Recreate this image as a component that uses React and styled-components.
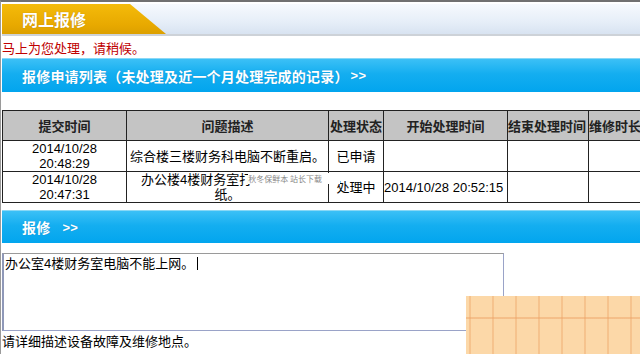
import React from "react";
import styled, { createGlobalStyle } from "styled-components";

const Global = createGlobalStyle`
  html, body { margin: 0; padding: 0; background: #fff; }
  body { font-family: "Liberation Sans", "Noto Sans CJK SC", sans-serif; font-size: 13px; color: #000; }
`;

const Page = styled.div`
  position: relative;
  overflow: hidden;
  border-top: 2px solid #707070;
  border-left: 1px solid #9a9a9a;
  padding-left: 1px;
  box-sizing: border-box;
  width: 640px;
  height: 354px;
`;

const Header = styled.div`
  margin-top: 2px;
  height: 32px;
  box-sizing: border-box;
  display: flex;
  align-items: flex-end;
  background: linear-gradient(#f6f9fd, #e6eef8 60%, #d8e3f1);
  border-bottom: 2px solid #cdd2d8;
`;

const Tab = styled.div`
  width: 164px;
  height: 30px;
  box-sizing: border-box;
  padding-left: 20px;
  display: flex;
  align-items: center;
  background: linear-gradient(#f4bb0a, #e8a900 70%, #dca000);
  clip-path: polygon(0 0, 128px 0, 164px 100%, 0 100%);
  color: #fff;
  font-family: "Noto Sans CJK SC", sans-serif;
  font-weight: 700;
  font-size: 16px;
  text-shadow: 0 0 1px rgba(120, 70, 0, 0.5);
`;

const Notice = styled.div`
  height: 22px;
  box-sizing: border-box;
  padding-top: 4px;
  line-height: 16px;
  color: #c00000;
  font-family: "Noto Sans CJK SC", sans-serif;
  font-size: 13px;
`;

const Bar = styled.div`
  height: ${(p) => p.$h}px;
  margin-top: ${(p) => p.$mt}px;
  box-sizing: border-box;
  display: flex;
  align-items: center;
  padding-left: 20px;
  border-top: 1px solid #8ad8f6;
  background: linear-gradient(#3cc0f6, #14aef0 45%, #02a5ee);
  color: #fff;
  font-family: "Noto Sans CJK SC", sans-serif;
  font-weight: 700;
  font-size: 14px;
  letter-spacing: 0.2px;
  text-shadow: 0 0 1px rgba(0, 80, 140, 0.4);
`;

const Chevrons = styled.span`
  margin-left: ${(p) => p.$ml}px;
  font-family: "Liberation Sans", sans-serif;
  font-weight: 700;
  font-size: 13px;
`;

const TableWrap = styled.div`
  margin-top: 18px;
  width: 680px;
`;

const Table = styled.table`
  border-collapse: collapse;
  table-layout: fixed;
  width: 672px;
  border: 1px solid #000;
`;

const Th = styled.th`
  background: #c4c4c4;
  border: 1px solid #222;
  height: 29px;
  padding: 0;
  font-family: "Noto Sans CJK SC", sans-serif;
  font-weight: 700;
  font-size: 13px;
  color: #222;
  white-space: nowrap;
  overflow: hidden;
  text-align: ${(p) => p.$align || "center"};
`;

const Td = styled.td`
  border: 1px solid #222;
  height: 30px;
  padding: 0;
  line-height: 15px;
  text-align: ${(p) => p.$align || "center"};
  white-space: ${(p) => (p.$nowrap ? "nowrap" : "normal")};
  overflow: visible;
  font-size: 13px;
`;

const Line = styled.div`
  white-space: nowrap;
  text-align: ${(p) => p.$align || "center"};
  padding-left: ${(p) => p.$pl || 0}px;
  height: 15px;
`;

const WaterTag = styled.span`
  display: inline-block;
  width: 92px;
  height: 11px;
  margin-left: -4px;
  vertical-align: top;
  margin-top: 1px;
  background: #fff;
  color: #888;
  font-size: 8px;
  line-height: 11px;
  font-family: "Noto Sans CJK SC", sans-serif;
  text-align: left;
  overflow: hidden;
  position: relative;
`;

const Field = styled.div`
  margin-top: 10px;
  width: 502px;
  height: 78px;
  box-sizing: border-box;
  border: 1px solid #9aa3c8;
  border-top-color: #9a9a9a;
  border-left: 2px solid #8f98b8;
  padding: 2px 1px;
  line-height: 16px;
  font-size: 13px;
  font-family: "Liberation Sans", "Noto Sans CJK SC", sans-serif;
`;

const Caret = styled.span`
  display: inline-block;
  width: 1px;
  height: 13px;
  margin-left: 3px;
  background: #000;
  vertical-align: -2px;
`;

const Hint = styled.div`
  margin-top: 2px;
  line-height: 18px;
  font-size: 13px;
`;

const Grid = styled.div`
  position: absolute;
  right: 0;
  bottom: 0;
  width: 174px;
  height: 58px;
  background-color: #fcd8a8;
  background-image:
    linear-gradient(to bottom, transparent 21px, rgba(236, 160, 100, 0.45) 21px, rgba(236, 160, 100, 0.45) 23px, transparent 23px),
    repeating-linear-gradient(to right, transparent 0, transparent 3px, rgba(238, 170, 110, 0.45) 3px, rgba(238, 170, 110, 0.45) 5px, transparent 5px, transparent 23px);
`;

const headers = [
  { t: "提交时间", w: 124 },
  { t: "问题描述", w: 202 },
  { t: "处理状态", w: 55 },
  { t: "开始处理时间", w: 124 },
  { t: "结束处理时间", w: 81, align: "left" },
  { t: "维修时长", w: 86, align: "left" },
];

export default function App() {
  return (
    <>
      <Global />
      <Page>
        <Header>
          <Tab>网上报修</Tab>
        </Header>
        <Notice>马上为您处理，请稍候。</Notice>
        <Bar $h={34} $mt={0}>
          报修申请列表（未处理及近一个月处理完成的记录）<Chevrons $ml={2}>&gt;&gt;</Chevrons>
        </Bar>
        <TableWrap>
          <Table>
            <colgroup>
              {headers.map((h) => (
                <col key={h.t} style={{ width: h.w }} />
              ))}
            </colgroup>
            <thead>
              <tr>
                {headers.map((h) => (
                  <Th key={h.t} $align={h.align}>
                    {h.t}
                  </Th>
                ))}
              </tr>
            </thead>
            <tbody>
              <tr>
                <Td>
                  2014/10/28
                  <br />
                  20:48:29
                </Td>
                <Td $nowrap>综合楼三楼财务科电脑不断重启。</Td>
                <Td>已申请</Td>
                <Td />
                <Td />
                <Td />
              </tr>
              <tr>
                <Td>
                  2014/10/28
                  <br />
                  20:47:31
                </Td>
                <Td>
                  <Line $align="left" $pl={14}>
                    办公楼4楼财务室打
                    <WaterTag>秋冬保鲜本 站长下载</WaterTag>
                  </Line>
                  <Line>纸。</Line>
                </Td>
                <Td>处理中</Td>
                <Td $align="left" $nowrap>
                  2014/10/28 20:52:15
                </Td>
                <Td />
                <Td />
              </tr>
            </tbody>
          </Table>
        </TableWrap>
        <Bar $h={33} $mt={7}>
          报修<Chevrons $ml={12}>&gt;&gt;</Chevrons>
        </Bar>
        <Field>
          办公室4楼财务室电脑不能上网。
          <Caret />
        </Field>
        <Hint>请详细描述设备故障及维修地点。</Hint>
        <Grid />
      </Page>
    </>
  );
}
